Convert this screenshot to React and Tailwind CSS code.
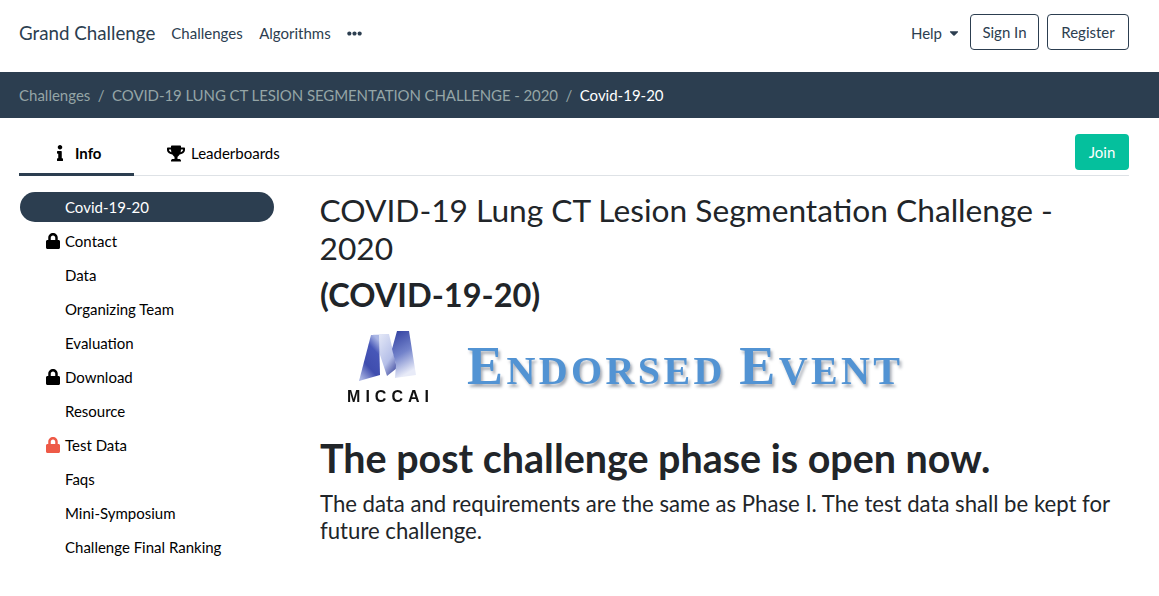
import React from "react";
import { FaCaretDown, FaEllipsisH, FaInfo, FaLock, FaTrophy } from "react-icons/fa";

const pages = [
  { label: "Covid-19-20", active: true },
  { label: "Contact", lock: "text-black" },
  { label: "Data" },
  { label: "Organizing Team" },
  { label: "Evaluation" },
  { label: "Download", lock: "text-black" },
  { label: "Resource" },
  { label: "Test Data", lock: "text-[#ee5a47]" },
  { label: "Faqs" },
  { label: "Mini-Symposium" },
  { label: "Challenge Final Ranking" },
];

function MiccaiLogo() {
  return (
    <div className="flex w-[90px] flex-col items-center">
      <svg width="58" height="51" viewBox="0 0 58 51" className="blur-[0.4px]">
        <defs>
          <linearGradient id="mLeft" x1="0.2" y1="1" x2="0.7" y2="0">
            <stop offset="0" stopColor="#a9b3e2" />
            <stop offset="0.35" stopColor="#3f4dae" />
            <stop offset="0.75" stopColor="#4757b8" />
            <stop offset="1" stopColor="#aab6e4" />
          </linearGradient>
          <linearGradient id="mMid" x1="0" y1="0" x2="0.8" y2="1">
            <stop offset="0" stopColor="#eef1fa" />
            <stop offset="0.7" stopColor="#b5bfe8" />
            <stop offset="1" stopColor="#4b55a5" />
          </linearGradient>
          <linearGradient id="mRight" x1="0" y1="0" x2="0.3" y2="1">
            <stop offset="0" stopColor="#2f3e9e" />
            <stop offset="0.55" stopColor="#7383cb" />
            <stop offset="1" stopColor="#e8ebf8" />
          </linearGradient>
        </defs>
        <path d="M14 3 L30 3 L38 37 L28 45 Z" fill="url(#mMid)" />
        <path d="M12 4 L20 4 L21 44 L0 50 Z" fill="url(#mLeft)" />
        <path d="M38 0 L50 0 L57 44 L36 47 L37 34 L33 18 Z" fill="url(#mRight)" />
      </svg>
      <span className="mt-[7px] pl-[5px] text-[16px] leading-none font-bold tracking-[5px] whitespace-nowrap text-[#111] blur-[0.3px] font-['Liberation_Sans',sans-serif]">
        MICCAI
      </span>
    </div>
  );
}

export default function App() {
  return (
    <div className="min-h-screen bg-white text-[15px] text-[#212529] font-['Lato',sans-serif]">
      {/* Navbar */}
      <nav className="flex h-[72px] items-center pr-[30px] pb-2 pl-[19px] text-[#2c3e50]">
        <a className="mt-[3px] mr-[16px] text-[18.75px]">Grand Challenge</a>
        <a className="mt-[3px] mr-[16.5px]">Challenges</a>
        <a className="mt-[3px] mr-[16.5px]">Algorithms</a>
        <FaEllipsisH className="mt-[2px] h-[15px] w-[15px]" />
        <div className="ml-auto flex items-center">
          <a className="mt-[3px]">Help</a>
          <FaCaretDown className="mt-[2px] mr-[9px] ml-[5px] h-[14px] w-[14px]" />
          <button className="mr-2 h-9 w-[69px] rounded border border-[#2c3e50]">Sign In</button>
          <button className="h-9 w-[82px] rounded border border-[#2c3e50]">Register</button>
        </div>
      </nav>

      {/* Breadcrumb */}
      <div className="flex h-[46px] items-center gap-[7.5px] bg-[#2c3e50] pl-[19px] text-[#95a5a6]">
        <a>Challenges</a>
        <span>/</span>
        <a className="tracking-[-0.09px]">COVID-19 LUNG CT LESION SEGMENTATION CHALLENGE - 2020</a>
        <span>/</span>
        <span className="text-white">Covid-19-20</span>
      </div>

      <div className="pr-[30px] pl-[19px]">
        {/* Tabs */}
        <div className="flex h-[58px] items-end border-b border-[#dee2e6]">
          <div className="-mb-px flex h-[43px] w-[115px] items-center gap-[7px] border-b-[3px] border-[#2c3e50] pl-[33px] font-bold text-black">
            <FaInfo className="h-4 w-4" />
            Info
          </div>
          <div className="-mb-px flex h-[43px] items-center gap-[6px] pb-[3px] pl-[33px] text-black">
            <FaTrophy className="h-[17px] w-[18px]" />
            Leaderboards
          </div>
          <button className="mb-[5px] ml-auto h-9 w-[54px] self-end rounded bg-[#05c09d] text-white">Join</button>
        </div>

        <div className="flex">
          {/* Sidebar */}
          <ul className="mt-4 ml-px w-[254px] shrink-0 text-black">
            {pages.map(({ label, active, lock }) => (
              <li
                key={label}
                className={`mb-1 flex h-[30px] items-center rounded-full pl-[45px] ${active ? "bg-[#2c3e50] text-white" : ""}`}
              >
                <span className="relative">
                  {lock && <FaLock className={`absolute top-[3px] -left-[19px] h-4 w-[14px] ${lock}`} />}
                  {label}
                </span>
              </li>
            ))}
          </ul>

          {/* Page content */}
          <main className="ml-[46px] min-w-0 flex-1 pt-[15px] pr-[15px]">
            <h2 className="-ml-[0.5px] text-[31.7px] leading-[38px]">COVID-19 Lung CT Lesion Segmentation Challenge - 2020</h2>
            <h3 className="mt-[9px] text-[32.5px] leading-[38px] font-bold">(COVID-19-20)</h3>
            <div className="mt-[17px] flex h-[90px] items-start">
              <div className="ml-[23px]">
                <MiccaiLogo />
              </div>
              <div className="mt-[8px] ml-[34px] text-[40px] leading-[54px] font-bold tracking-[3.4px] whitespace-nowrap text-[#5293d3] blur-[0.4px] [text-shadow:2px_3px_3px_rgba(60,70,90,0.45)] font-['Liberation_Serif',serif]">
                <span className="text-[54px]">E</span>NDORSED <span className="text-[54px]">E</span>VENT
              </div>
            </div>
            <h1 className="mt-[13px] text-[39.45px] leading-[48px] font-bold">The post challenge phase is open now.</h1>
            <p className="mt-2 text-[22.15px] leading-[27px]">
              The data and requirements are the same as Phase I. The test data shall be kept for future challenge.
            </p>
          </main>
        </div>
      </div>
    </div>
  );
}
